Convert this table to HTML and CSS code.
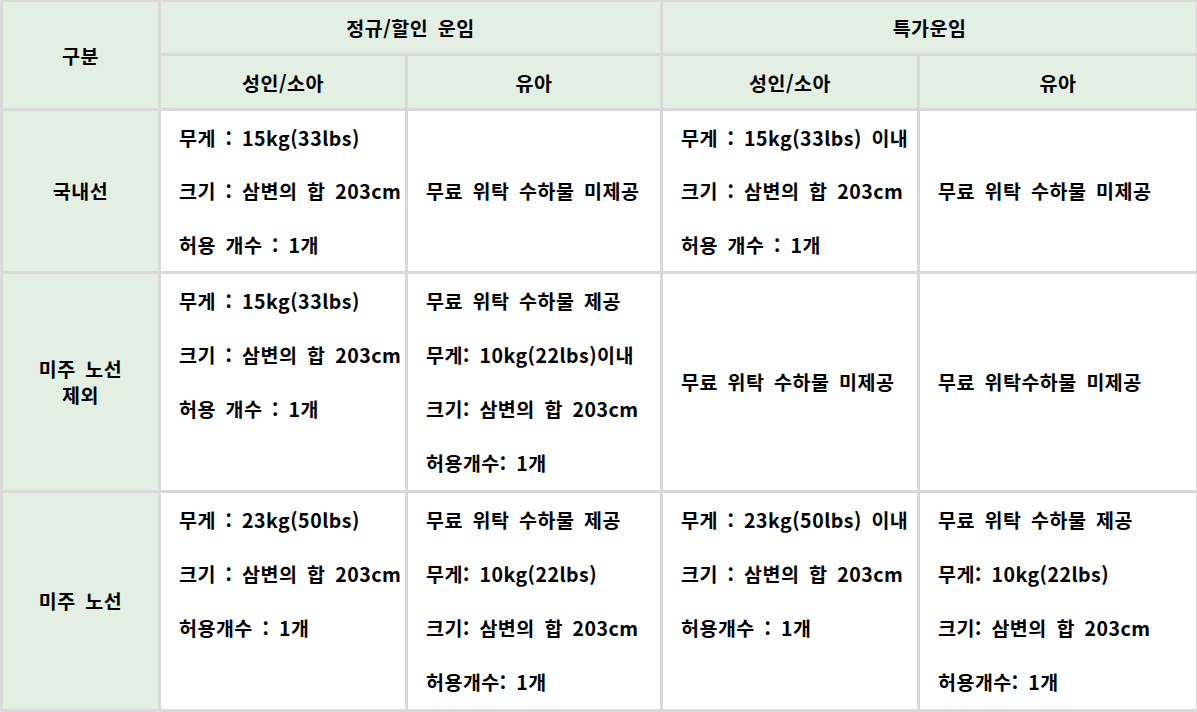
FILE: index.html
```html
<!DOCTYPE html>
<html lang="ko">
<head>
<meta charset="utf-8">
<link rel="stylesheet" href="styles.css">
</head>
<body>
<div class="wrap">
<table class="fare">
  <colgroup>
    <col class="c0"><col class="c1"><col class="c2"><col class="c3"><col class="c4">
  </colgroup>
  <thead>
    <tr class="h1">
      <th rowspan="2">구분</th>
      <th colspan="2">정규/할인 운임</th>
      <th colspan="2">특가운임</th>
    </tr>
    <tr class="h2">
      <th>성인/소아</th>
      <th>유아</th>
      <th>성인/소아</th>
      <th>유아</th>
    </tr>
  </thead>
  <tbody>
    <tr class="r1">
      <th class="label">국내선</th>
      <td><div class="ln">무게 : 15kg(33lbs)</div><div class="ln">크기 : 삼변의 합 203cm</div><div class="ln">허용 개수 : 1개</div></td>
      <td><div class="ln">무료 위탁 수하물 미제공</div></td>
      <td><div class="ln">무게 : 15kg(33lbs) 이내</div><div class="ln">크기 : 삼변의 합 203cm</div><div class="ln">허용 개수 : 1개</div></td>
      <td><div class="ln">무료 위탁 수하물 미제공</div></td>
    </tr>
    <tr>
      <th class="label">미주 노선<br>제외</th>
      <td class="tp"><div class="ln">무게 : 15kg(33lbs)</div><div class="ln">크기 : 삼변의 합 203cm</div><div class="ln">허용 개수 : 1개</div></td>
      <td><div class="ln">무료 위탁 수하물 제공</div><div class="ln">무게: 10kg(22lbs)이내</div><div class="ln">크기: 삼변의 합 203cm</div><div class="ln">허용개수: 1개</div></td>
      <td><div class="ln">무료 위탁 수하물 미제공</div></td>
      <td><div class="ln">무료 위탁수하물 미제공</div></td>
    </tr>
    <tr class="top">
      <th class="label">미주 노선</th>
      <td><div class="ln">무게 : 23kg(50lbs)</div><div class="ln">크기 : 삼변의 합 203cm</div><div class="ln">허용개수 : 1개</div></td>
      <td><div class="ln">무료 위탁 수하물 제공</div><div class="ln">무게: 10kg(22lbs)</div><div class="ln">크기: 삼변의 합 203cm</div><div class="ln">허용개수: 1개</div></td>
      <td><div class="ln">무게 : 23kg(50lbs) 이내</div><div class="ln">크기 : 삼변의 합 203cm</div><div class="ln">허용개수 : 1개</div></td>
      <td><div class="ln">무료 위탁 수하물 제공</div><div class="ln">무게: 10kg(22lbs)</div><div class="ln">크기: 삼변의 합 203cm</div><div class="ln">허용개수: 1개</div></td>
    </tr>
  </tbody>
</table>
</div>
</body>
</html>
```

FILE: styles.css
```css
html, body {
  margin: 0;
  padding: 0;
  background: #ffffff;
}
.wrap {
  width: 1197px;
  height: 712px;
  overflow: hidden;
}
.fare {
  border-collapse: collapse;
  table-layout: fixed;
  width: 1199px;
  margin-top: -1px;
  font-family: "Noto Sans CJK KR", "Noto Sans", sans-serif;
  font-weight: 700;
  font-size: 19.5px;
  letter-spacing: 0.5px;
  word-spacing: 3.7px;
  color: #000000;
}
.c0 { width: 158px; }
.c1 { width: 247px; }
.c2 { width: 255px; }
.c3 { width: 257px; }
.c4 { width: 279px; }
.fare th, .fare td {
  border: 3px solid #d9d9d9;
  padding: 0;
}
.fare th {
  background: #e2efe2;
  text-align: center;
  font-weight: 700;
}
.h1 th { height: 51px; }
.h2 th { height: 52px; }
.fare td {
  text-align: left;
  vertical-align: middle;
  padding-left: 18px;
  white-space: nowrap;
  overflow: hidden;
}
.fare th.label {
  line-height: 26px;
}
.ln {
  line-height: 54px;
}
.r1 .ln {
  line-height: 53.4px;
}
.top td,
.fare td.tp {
  vertical-align: top;
}
```
